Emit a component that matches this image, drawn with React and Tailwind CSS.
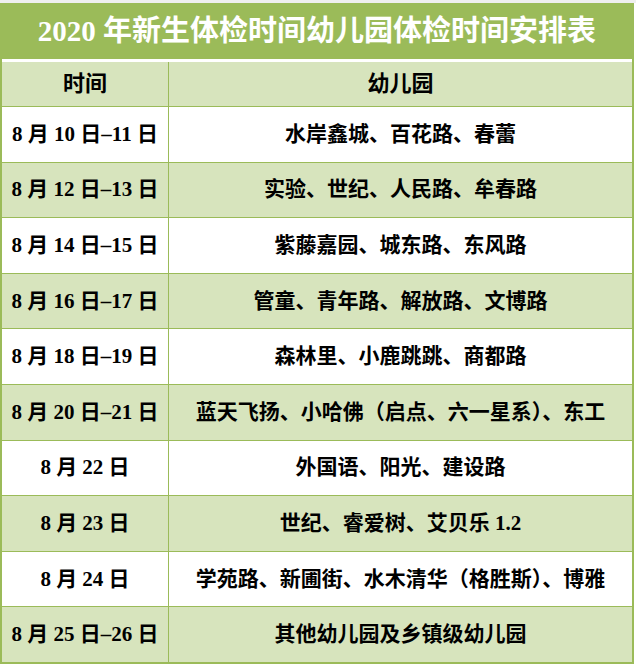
import React from "react";

const rows = [
  ["8 月 10 日–11 日", "水岸鑫城、百花路、春蕾"],
  ["8 月 12 日–13 日", "实验、世纪、人民路、牟春路"],
  ["8 月 14 日–15 日", "紫藤嘉园、城东路、东风路"],
  ["8 月 16 日–17 日", "管童、青年路、解放路、文博路"],
  ["8 月 18 日–19 日", "森林里、小鹿跳跳、商都路"],
  ["8 月 20 日–21 日", "蓝天飞扬、小哈佛（启点、六一星系）、东工"],
  ["8 月 22 日", "外国语、阳光、建设路"],
  ["8 月 23 日", "世纪、睿爱树、艾贝乐 1.2"],
  ["8 月 24 日", "学苑路、新圃街、水木清华（格胜斯）、博雅"],
  ["8 月 25 日–26 日", "其他幼儿园及乡镇级幼儿园"],
];

const font = { fontFamily: '"Liberation Serif", "Noto Sans CJK SC", serif' };

export default function App() {
  return (
    <div className="w-[636px] h-[665px] bg-white" style={font}>
      <div className="h-[3px] bg-[#efefef]" />
      <div className="w-[634px] border-x-2 border-b-2 border-[#9bbb59]">
        <div className="h-[56px] bg-[#9bbb59] flex items-center justify-center text-white text-[29px] font-bold leading-none">
          2020 年新生体检时间幼儿园体检时间安排表
        </div>
        <div className="h-[3px] bg-white" />
        <div className="h-[44px] bg-[#d7e4bd] grid grid-cols-[166px_1fr] text-[22px] font-bold text-black leading-none">
          <div className="flex items-center justify-center">时间</div>
          <div className="flex items-center justify-center border-l border-[#9bbb59]">幼儿园</div>
        </div>
        <div className="h-[556px] flex flex-col">
          {rows.map(([t, k], i) => (
            <div
              key={i}
              className={
                "flex-1 grid grid-cols-[166px_1fr] border-t border-[#9bbb59] text-[21px] font-bold text-black leading-none " +
                (i % 2 === 1 ? "bg-[#d7e4bd]" : "bg-white")
              }
            >
              <div className="flex items-center justify-center whitespace-pre">{t}</div>
              <div className="flex items-center justify-center border-l border-[#9bbb59] whitespace-pre">{k}</div>
            </div>
          ))}
        </div>
      </div>
    </div>
  );
}
